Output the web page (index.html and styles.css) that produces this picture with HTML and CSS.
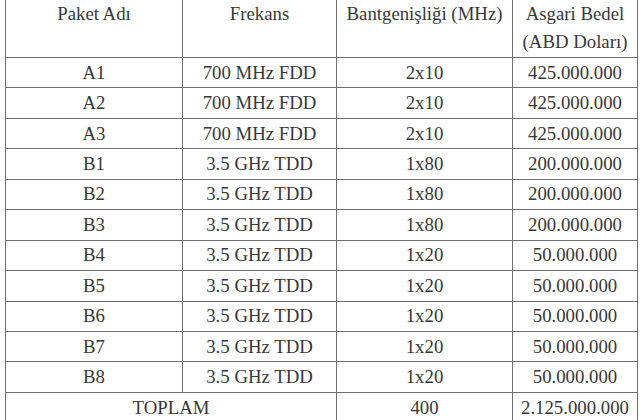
FILE: index.html
```html
<!DOCTYPE html>
<html lang="tr">
<head>
  <meta charset="UTF-8" />
  <title>Paket Listesi</title>
  <link rel="stylesheet" href="styles.css">
</head>
<body>

<table class="packages">
  <colgroup>
    <col class="c-name">
    <col class="c-freq">
    <col class="c-band">
    <col class="c-price">
  </colgroup>
  <thead>
    <tr>
      <th>Paket Adı</th>
      <th>Frekans</th>
      <th>Bantgenişliği (MHz)</th>
      <th>Asgari Bedel<br>(ABD Doları)</th>
    </tr>
  </thead>
  <tbody>
    <tr><td>A1</td><td>700 MHz FDD</td><td>2x10</td><td>425.000.000</td></tr>
    <tr><td>A2</td><td>700 MHz FDD</td><td>2x10</td><td>425.000.000</td></tr>
    <tr><td>A3</td><td>700 MHz FDD</td><td>2x10</td><td>425.000.000</td></tr>
    <tr><td>B1</td><td>3.5 GHz TDD</td><td>1x80</td><td>200.000.000</td></tr>
    <tr><td>B2</td><td>3.5 GHz TDD</td><td>1x80</td><td>200.000.000</td></tr>
    <tr><td>B3</td><td>3.5 GHz TDD</td><td>1x80</td><td>200.000.000</td></tr>
    <tr><td>B4</td><td>3.5 GHz TDD</td><td>1x20</td><td>50.000.000</td></tr>
    <tr><td>B5</td><td>3.5 GHz TDD</td><td>1x20</td><td>50.000.000</td></tr>
    <tr><td>B6</td><td>3.5 GHz TDD</td><td>1x20</td><td>50.000.000</td></tr>
    <tr><td>B7</td><td>3.5 GHz TDD</td><td>1x20</td><td>50.000.000</td></tr>
    <tr><td>B8</td><td>3.5 GHz TDD</td><td>1x20</td><td>50.000.000</td></tr>
    <tr class="total"><td colspan="2">TOPLAM</td><td>400</td><td>2.125.000.000</td></tr>
  </tbody>
</table>

</body>
</html>
```

FILE: styles.css
```css
html, body {
  overflow: hidden;
}
body {
  margin: 0;
  background: #fff;
  font-family: "Liberation Serif", "Times New Roman", serif;
  color: #383838;
}
.packages {
  margin-left: 5px;
  border-collapse: collapse;
  table-layout: fixed;
  width: 632px;
  font-size: 18.8px;
}
.c-name { width: 177px; }
.c-freq { width: 154px; }
.c-band { width: 176px; }
.c-price { width: 125px; }
.packages th,
.packages td {
  border: 1px solid #6f6f6f;
  padding: 0;
  text-align: center;
  white-space: nowrap;
}
.packages th {
  border-top: 0;
  height: 57px;
  line-height: 28px;
  vertical-align: top;
  font-weight: normal;
}
.packages td {
  height: 29.45px;
  line-height: 28px;
  vertical-align: middle;
}
```
